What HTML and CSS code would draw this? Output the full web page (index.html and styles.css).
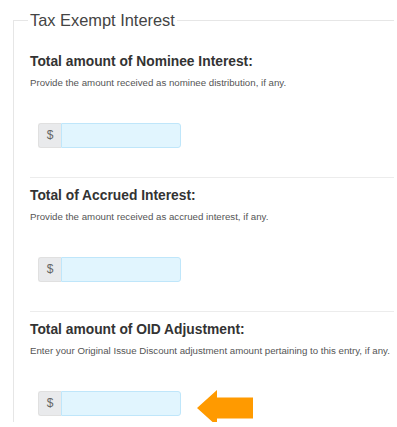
FILE: index.html
```html
<!DOCTYPE html>
<html>
<head>
<meta charset="utf-8">
<link rel="stylesheet" href="styles.css">
</head>
<body>
<fieldset class="group">
  <legend class="group-title">Tax Exempt Interest</legend>
  <div class="sections">
    <div class="section">
      <h3 class="q-title">Total amount of Nominee Interest:</h3>
      <p class="q-help">Provide the amount received as nominee distribution, if any.</p>
      <div class="row">
        <div class="input-group"><span class="addon">$</span><input class="amount" type="text"></div>
      </div>
    </div>
    <div class="section">
      <h3 class="q-title">Total of Accrued Interest:</h3>
      <p class="q-help">Provide the amount received as accrued interest, if any.</p>
      <div class="row">
        <div class="input-group"><span class="addon">$</span><input class="amount" type="text"></div>
      </div>
    </div>
    <div class="section last">
      <h3 class="q-title">Total amount of OID Adjustment:</h3>
      <p class="q-help">Enter your Original Issue Discount adjustment amount pertaining to this entry, if any.</p>
      <div class="row">
        <div class="input-group"><span class="addon">$</span><input class="amount" type="text"></div>
        <svg class="arrow" width="57" height="36" viewBox="0 0 57 36"><path d="M0 18 L20 0 L20 7.5 L56 7.5 L56 28.5 L20 28.5 L20 36 Z" fill="#ff9a00"/></svg>
      </div>
    </div>
  </div>
</fieldset>
</body>
</html>
```

FILE: styles.css
```css
html, body {
  margin: 0;
  padding: 0;
  background: #fff;
}
body {
  font-family: "Liberation Sans", Arial, sans-serif;
  color: #333;
}
.group {
  margin: 10px 0 0 13px;
  padding: 0 0 0 14px;
  width: 381px;
  box-sizing: border-box;
  border: 1px solid #e6e6e6;
  border-right: none;
  border-bottom: none;
  min-width: 0;
}
.group-title {
  padding: 0 2px;
  font-size: 16.4px;
  line-height: 20px;
  color: #444;
}
.sections {
  padding: 14px 0 0 2px;
}
.section {
  padding: 8px 0 29px 0;
  border-bottom: 1px solid #ececec;
}
.section.last {
  border-bottom: none;
  padding-bottom: 0;
}
.q-title {
  margin: 0;
  font-size: 13.8px;
  line-height: 20px;
  font-weight: bold;
  color: #333;
}
.q-help {
  margin: 4px 0 0 0;
  font-size: 9.7px;
  line-height: 14px;
  color: #555;
}
.row {
  display: flex;
  align-items: flex-start;
  margin-top: 33px;
  padding-left: 8px;
}
.input-group {
  display: flex;
  height: 25px;
}
.addon {
  width: 23px;
  box-sizing: border-box;
  height: 25px;
  background: #e9eaec;
  border: 1px solid #e0e0e0;
  border-right: none;
  border-radius: 3px 0 0 3px;
  font-size: 12px;
  line-height: 23px;
  text-align: center;
  color: #666;
}
.amount {
  width: 120px;
  height: 25px;
  box-sizing: border-box;
  margin: 0;
  padding: 0 6px;
  background: #e1f5fe;
  border: 1px solid #bfe6fa;
  border-radius: 0 3px 3px 0;
  outline: none;
  font-family: inherit;
}
.arrow {
  display: block;
  margin: -1px 0 -4px 16px;
}
```
